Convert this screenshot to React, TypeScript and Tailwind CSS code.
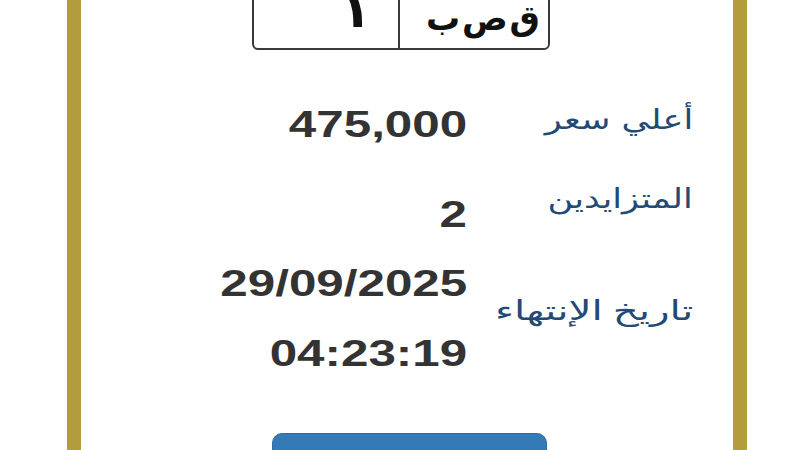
import React from "react";

const valueCls =
  "inline-block origin-right scale-x-[1.37] font-['Liberation_Sans',Arial,sans-serif] font-bold text-[36px] text-[#333333]";
const labelCls =
  "inline-block origin-right font-['DejaVu_Sans','Liberation_Sans',sans-serif] text-[27px] text-[#234a74] whitespace-nowrap";

export default function App() {
  return (
    <div className="h-[450px] w-[800px] overflow-hidden bg-white">
      <div className="ml-[67px] flex h-[450px] w-[680px] flex-col border-x-[14px] border-[#b49c3c] bg-white">
        {/* plate */}
        <div className="-mt-[30px] ml-[171px] flex h-[80px] w-[298px] shrink-0 rounded-md border-2 border-[#3a3a3a]">
          <div className="flex w-[146px] items-end justify-end border-r-2 border-[#3a3a3a] pb-[13px] pr-[27px]">
            <span className="font-['DejaVu_Sans',sans-serif] text-[50px] font-bold leading-none text-[#111]">
              ١
            </span>
          </div>
          <div dir="rtl" className="flex flex-1 items-end justify-start pb-[13px] pr-[8px]">
            <span className="inline-block whitespace-nowrap font-['DejaVu_Sans',sans-serif] text-[34px] font-bold leading-none tracking-[-1px] text-[#111] [word-spacing:-10px]">
              ق ص ب
            </span>
          </div>
        </div>

        {/* rows */}
        <div className="mt-[40px] flex flex-col">
          <div className="flex h-[70px]">
            <div className="ml-[126px] flex w-[260px] items-center justify-end">
              <span className={valueCls}>475,000</span>
            </div>
            <div dir="rtl" className="flex w-[226px] items-center pb-[10px]">
              <span className={labelCls + " scale-x-[1.3]"}>أعلي سعر</span>
            </div>
          </div>
          <div className="mt-[21px] flex h-[68px]">
            <div className="ml-[126px] flex w-[260px] items-center justify-end">
              <span className={valueCls}>2</span>
            </div>
            <div dir="rtl" className="flex w-[226px] items-center pb-[32px]">
              <span className={labelCls + " scale-x-[1.3]"}>المتزايدين</span>
            </div>
          </div>
          <div className="flex">
            <div className="ml-[126px] flex w-[260px] flex-col items-end">
              <span className={valueCls + " leading-[70px]"}>29/09/2025</span>
              <span className={valueCls + " leading-[70px]"}>04:23:19</span>
            </div>
            <div dir="rtl" className="flex w-[226px] items-center pb-[16px]">
              <span className={labelCls + " scale-x-[1.5] [word-spacing:-2px]"}>تاريخ الإنتهاء</span>
            </div>
          </div>
        </div>

        {/* button */}
        <div className="mt-[44px] ml-[191px] flex h-[46px] w-[275px] shrink-0 items-start justify-center rounded-[10px] border border-[#2e6da4] bg-[#337ab7] pt-[12px]">
          <span className="font-['DejaVu_Sans',sans-serif] text-[24px] font-bold text-white">
            زايد الآن
          </span>
        </div>
      </div>
    </div>
  );
}
